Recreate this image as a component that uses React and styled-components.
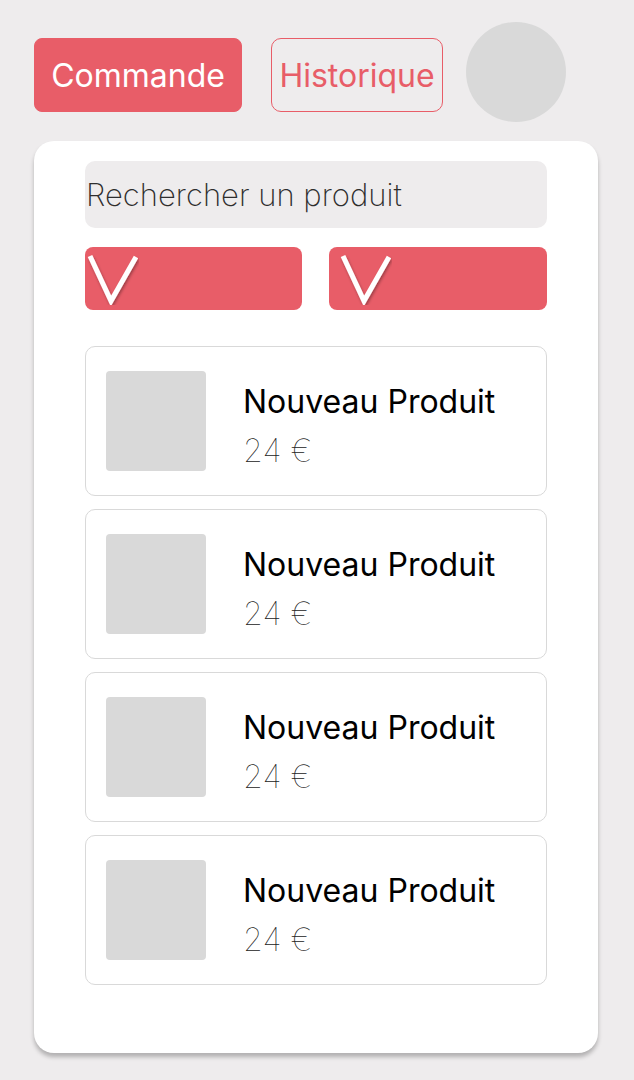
import React from "react";
import styled, { createGlobalStyle } from "styled-components";

const GlobalStyle = createGlobalStyle`
  body {
    margin: 0;
    background: #eeeced;
    font-family: "Inter", "Noto Sans", sans-serif;
  }
`;

const products = [
  { id: 1, name: "Nouveau Produit", price: "24 €" },
  { id: 2, name: "Nouveau Produit", price: "24 €" },
  { id: 3, name: "Nouveau Produit", price: "24 €" },
  { id: 4, name: "Nouveau Produit", price: "24 €" },
];

const Chevron = () => (
  <svg width="52" height="52" viewBox="0 0 52 52">
    <defs>
      <filter id="chevShadow" x="-30%" y="-30%" width="160%" height="160%">
        <feDropShadow dx="1" dy="2" stdDeviation="1.5" floodColor="#000" floodOpacity="0.35" />
      </filter>
    </defs>
    <polyline
      points="3,3 24,48 49,4"
      fill="none"
      stroke="#fff"
      strokeWidth="5"
      strokeLinejoin="miter"
      filter="url(#chevShadow)"
    />
  </svg>
);

const App = () => {
  return (
    <>
      <GlobalStyle />
      <Page>
        <Header>
          <TabButton $active>Commande</TabButton>
          <TabButton>Historique</TabButton>
          <Avatar />
        </Header>
        <Panel>
          <Search placeholder="Rechercher un produit" />
          <Filters>
            <FilterButton $offset={2}>
              <Chevron />
            </FilterButton>
            <FilterButton $offset={11}>
              <Chevron />
            </FilterButton>
          </Filters>
          <ProductList>
            {products.map((p) => (
              <ProductCard key={p.id}>
                <Thumb />
                <Info>
                  <Name>{p.name}</Name>
                  <Price>{p.price}</Price>
                </Info>
              </ProductCard>
            ))}
          </ProductList>
        </Panel>
      </Page>
    </>
  );
};

export default App;

const Page = styled.div`
  width: 634px;
  min-height: 1080px;
  padding: 22px 0 0 34px;
  box-sizing: border-box;
`;

const Header = styled.div`
  display: flex;
  align-items: center;
  height: 100px;
  margin-bottom: 19px;
`;

const TabButton = styled.button`
  height: 74px;
  margin-top: 6px;
  padding: 0;
  margin-right: ${(p) => (p.$active ? "29px" : "23px")};
  width: ${(p) => (p.$active ? "208px" : "172px")};
  border-radius: ${(p) => (p.$active ? "8px" : "10px")};
  border: 1px solid #e85d68;
  background: ${(p) => (p.$active ? "#e85d68" : "transparent")};
  color: ${(p) => (p.$active ? "#fff" : "#e85d68")};
  font-family: "Inter", sans-serif;
  font-size: 32px;
  font-weight: 400;
  cursor: pointer;
`;

const Avatar = styled.div`
  width: 100px;
  height: 100px;
  border-radius: 50%;
  background: #d9d9d9;
`;

const Panel = styled.div`
  width: 564px;
  height: 912px;
  box-sizing: border-box;
  background: #fff;
  border-radius: 20px;
  box-shadow: 0 4px 4px rgba(0, 0, 0, 0.25);
  padding: 20px 51px 0 51px;
`;

const Search = styled.input`
  display: block;
  width: 100%;
  height: 67px;
  box-sizing: border-box;
  border: none;
  outline: none;
  border-radius: 10px;
  background: #eeeced;
  padding: 0 0 0 1px;
  font-family: "Inter", sans-serif;
  font-size: 31px;
  font-weight: 200;
  color: #333;
  &::placeholder {
    color: #2e2e2e;
  }
`;

const Filters = styled.div`
  display: grid;
  grid-template-columns: 217px 218px;
  justify-content: space-between;
  margin-top: 19px;
`;

const FilterButton = styled.button`
  height: 63px;
  border: none;
  border-radius: 8px;
  background: #e85d68;
  display: flex;
  align-items: flex-start;
  padding: 6px 0 0 ${(p) => p.$offset}px;
  cursor: pointer;
  svg {
    display: block;
  }
`;

const ProductList = styled.div`
  display: flex;
  flex-direction: column;
  gap: 13px;
  margin-top: 36px;
`;

const ProductCard = styled.div`
  height: 150px;
  box-sizing: border-box;
  border: 1px solid #d9d9d9;
  border-radius: 10px;
  display: flex;
  align-items: center;
  padding-left: 20px;
`;

const Thumb = styled.div`
  width: 100px;
  height: 100px;
  border-radius: 4px;
  background: #d9d9d9;
  flex-shrink: 0;
`;

const Info = styled.div`
  align-self: flex-start;
  display: flex;
  flex-direction: column;
  gap: 11px;
  margin: 36px 0 0 37px;
`;

const Name = styled.div`
  font-size: 32px;
  font-weight: 400;
  color: #000;
  line-height: 38px;
`;

const Price = styled.div`
  font-size: 32px;
  font-weight: 100;
  color: #222;
  line-height: 38px;
`;
